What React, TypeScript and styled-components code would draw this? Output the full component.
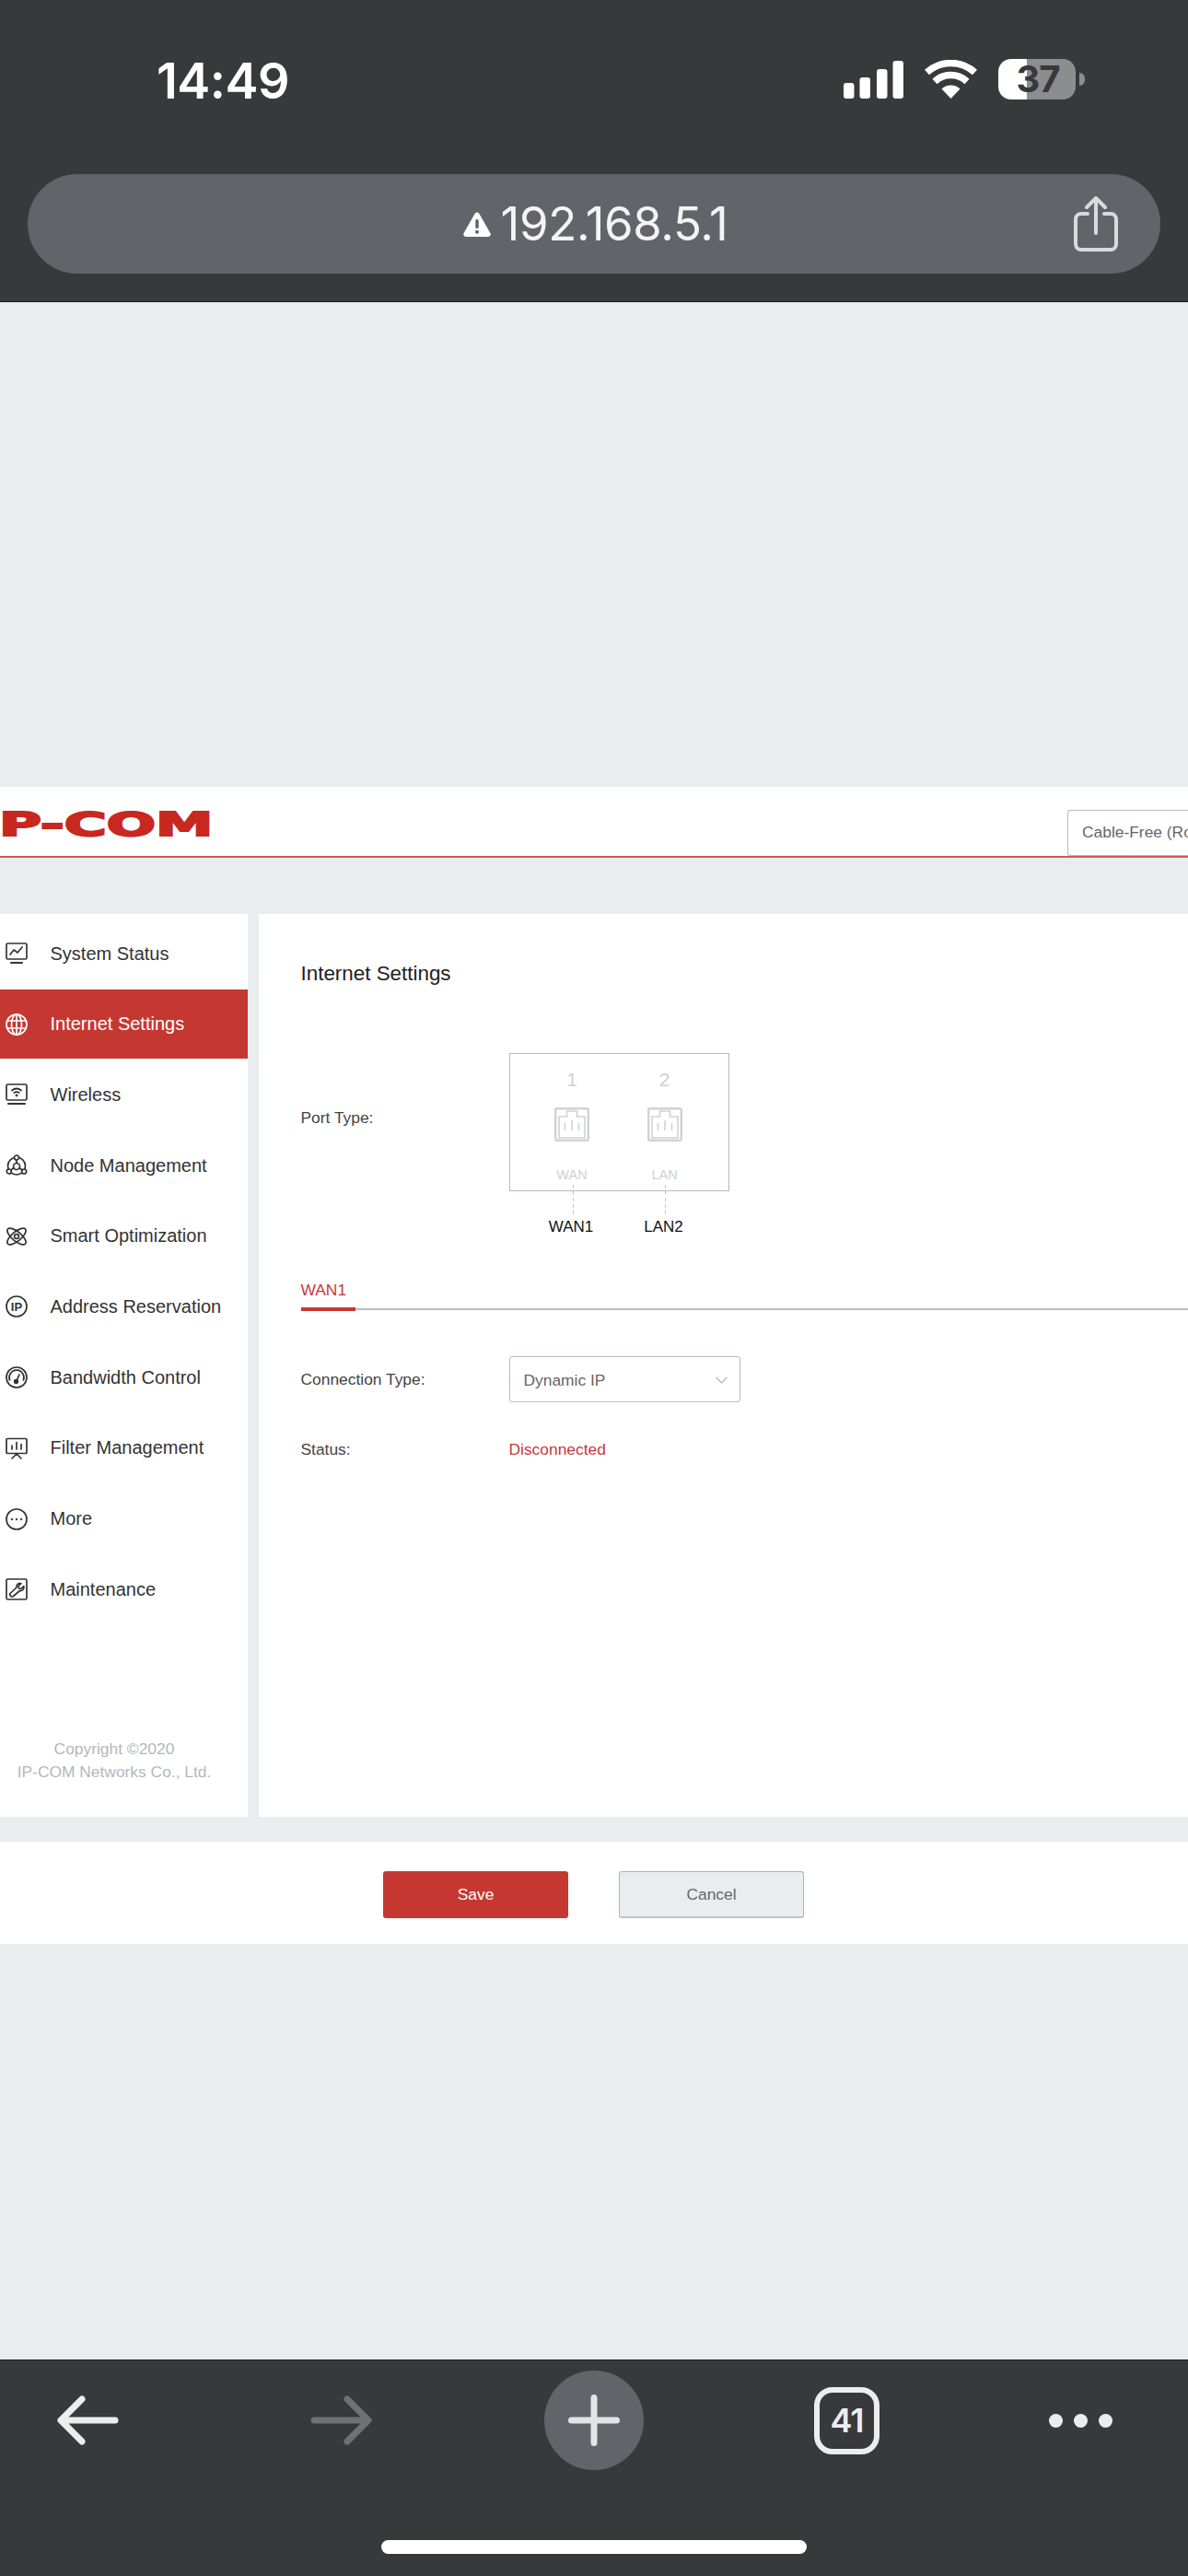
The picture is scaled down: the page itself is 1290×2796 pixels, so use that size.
import styled, { createGlobalStyle } from "styled-components";

const GlobalStyle = createGlobalStyle`
	* { box-sizing: border-box; }
	html, body { margin: 0; padding: 0; background: #e9edf0; }
	body { font-family: "Liberation Sans", Arial, sans-serif; }
`;

const Phone = styled.div`
	width: 1290px;
	height: 2796px;
	display: flex;
	flex-direction: column;
	overflow: hidden;
	background: #e9edf0;
`;

/* browser chrome, top */
const TopBar = styled.div`
	height: 328px;
	padding-top: 64px;
	background: #38393b;
	border-bottom: 1px solid #1c1c1e;
	font-family: Inter, sans-serif;
`;
const StatusRow = styled.div`
	height: 44px;
	padding: 0 112px 0 170px;
	display: flex;
	align-items: center;
	justify-content: space-between;
`;
const Time = styled.div`
	font-size: 54px;
	font-weight: 600;
	line-height: 44px;
	letter-spacing: -0.5px;
	color: #fff;
	position: relative;
	top: 2px;
`;
const StatusIcons = styled.div`
	display: flex;
	align-items: center;
	gap: 23px;
`;
const BatteryWrap = styled.div`
	display: flex;
	align-items: center;
	gap: 4px;
`;
const Battery = styled.div`
	width: 84px;
	height: 44px;
	border-radius: 14px;
	background: linear-gradient(90deg, #fff 37%, #8c8d8f 37%);
	color: #38393b;
	font-size: 40px;
	font-weight: 700;
	letter-spacing: -1px;
	line-height: 44px;
	text-align: center;
	padding-left: 2px;
`;
const BatteryNub = styled.div`
	width: 6px;
	height: 14px;
	border-radius: 0 8px 8px 0;
	background: #8c8d8f;
`;
const UrlPill = styled.div`
	height: 108px;
	margin: 81px 30px 0;
	padding: 0 46px;
	border-radius: 54px;
	background: #616469;
	display: grid;
	grid-template-columns: 1fr auto 1fr;
	align-items: center;
`;
const Url = styled.div`
	grid-column: 2;
	display: flex;
	align-items: center;
	gap: 10px;
	font-size: 51px;
	line-height: 60px;
	letter-spacing: -0.4px;
	color: #f4f4f5;
	position: relative;
	left: 1px;
`;
const ShareSlot = styled.div`
	grid-column: 3;
	display: flex;
	justify-content: flex-end;
`;

/* router admin page */
const Page = styled.div`
	flex: 1;
	padding-top: 526px;
	color: #333;
`;
const Header = styled.div`
	height: 77px;
	background: #fff;
	border-bottom: 2.5px solid #d3585a;
	display: flex;
	align-items: flex-start;
	justify-content: space-between;
	overflow: hidden;
`;
const Logo = styled.div`
	margin: 16px 0 0 -1px;
	font-family: "DejaVu Sans", sans-serif;
	font-size: 36px;
	line-height: 50px;
	font-weight: 700;
	color: #c8281f;
	-webkit-text-stroke: 2px #c8281f;
	transform: scaleX(1.74);
	transform-origin: left center;
`;
const ModeSelect = styled.div`
	width: 131px;
	height: 50px;
	margin-top: 25px;
	padding-left: 15px;
	border: 1.5px solid #b5bac3;
	border-right: 0;
	border-radius: 3px 0 0 3px;
	font-size: 17.4px;
	line-height: 47px;
	color: #666;
	white-space: nowrap;
`;
const Body = styled.div`
	margin-top: 61px;
	height: 980px;
	display: flex;
	gap: 12px;
`;
const Sidebar = styled.div`
	width: 269px;
	padding-top: 5.5px;
	background: #fff;
	display: flex;
	flex-direction: column;
	gap: 1.7px;
`;
const NavItem = styled.div<{ $active?: boolean }>`
	height: 75px;
	padding-left: 6px;
	display: flex;
	align-items: center;
	gap: 24.5px;
	font-size: 20px;
	color: ${(props) => (props.$active ? "#fff" : "#333")};
	background: ${(props) => (props.$active ? "#c53832" : "transparent")};
`;
const NavIcon = styled.svg`
	width: 24px;
	height: 24px;
	flex: none;
	fill: none;
	stroke: currentColor;
	stroke-width: 1.7;
	stroke-linecap: round;
	stroke-linejoin: round;
`;
const Copyright = styled.div`
	margin-top: auto;
	width: 248px;
	padding-bottom: 36px;
	font-size: 17.4px;
	line-height: 25px;
	text-align: center;
	color: #b4b7bb;
`;
const Main = styled.div`
	flex: 1;
	padding: 49px 0 0 45.5px;
	background: #fff;
`;
const Title = styled.div`
	font-size: 22.4px;
	line-height: 32px;
	color: #222;
`;
const PortRow = styled.div`
	margin-top: 70px;
	display: flex;
	font-size: 17.4px;
`;
const Label = styled.div`
	width: 226px;
	flex: none;
	line-height: 24px;
	font-size: 17.4px;
	color: #444;
`;
const PortLabel = styled(Label)`
	padding-top: 58px;
`;
const PortBox = styled.div`
	width: 239px;
	height: 150px;
	padding: 16px 0 0 27.5px;
	border: 1.5px solid #b4bac4;
	display: flex;
	gap: 20.5px;
`;
const PortCol = styled.div`
	position: relative;
	width: 80px;
	display: flex;
	flex-direction: column;
	align-items: center;
`;
const PortNumber = styled.div`
	font-size: 21px;
	line-height: 24px;
	color: #cfd1d4;
`;
const PortIcon = styled.svg`
	width: 38px;
	height: 37px;
	margin-top: 18px;
	fill: none;
	stroke: #d0d2d5;
	stroke-width: 1.6;
`;
const PortKind = styled.div`
	margin-top: 26px;
	font-size: 14.5px;
	line-height: 20px;
	color: #cfd1d4;
`;
const Dash = styled.div`
	position: absolute;
	left: 40.5px;
	top: 126px;
	width: 1.2px;
	height: 33px;
	background: repeating-linear-gradient(180deg, #c2c5c9 0 4px, transparent 4px 7px);
`;
const PortNames = styled.div`
	margin-top: 28px;
	padding-left: 27.5px;
	display: flex;
	gap: 20.5px;
`;
const PortName = styled.div`
	width: 80px;
	text-align: center;
	font-size: 17px;
	line-height: 22px;
	color: #111;
`;
const TabBar = styled.div`
	margin-top: 45px;
	display: flex;
	border-bottom: 2px solid #b8bcc4;
`;
const Tab = styled.div`
	width: 59px;
	margin-bottom: -3px;
	padding: 0 0 7px 0;
	border-bottom: 4px solid #c53832;
	font-size: 17.4px;
	line-height: 24px;
	color: #c8383a;
`;
const FormRow = styled.div<{ $top: number }>`
	margin-top: ${(props) => props.$top}px;
	display: flex;
	align-items: center;
`;
const Select = styled.div`
	width: 251px;
	height: 50px;
	padding: 2px 13px 0 15px;
	border: 1.5px solid #b5bac3;
	border-radius: 3px;
	display: flex;
	align-items: center;
	justify-content: space-between;
	font-size: 17.4px;
	color: #666;
`;
const Status = styled.div`
	font-size: 17.4px;
	line-height: 24px;
	color: #c9383c;
`;
const Footer = styled.div`
	margin-top: 27px;
	height: 111px;
	padding: 4px 1px 0 0;
	background: #fff;
	display: flex;
	align-items: center;
	justify-content: center;
	gap: 55px;
`;
const Button = styled.div<{ $primary?: boolean }>`
	width: 201px;
	height: 51px;
	border-radius: 3px;
	display: flex;
	align-items: center;
	justify-content: center;
	font-size: 17.4px;
	color: ${(props) => (props.$primary ? "#fff" : "#666")};
	background: ${(props) => (props.$primary ? "#c53832" : "#e9edf0")};
	border: ${(props) => (props.$primary ? "0" : "1.5px solid #aeb2ba")};
	border-bottom: ${(props) => (props.$primary ? "0" : "2px solid #c0c2c6")};
`;

/* browser chrome, bottom */
const BottomBar = styled.div`
	height: 235px;
	padding-top: 11px;
	background: #38393b;
	border-top: 1px solid #1c1c1e;
	font-family: Inter, sans-serif;
`;
const ToolRow = styled.div`
	display: grid;
	grid-template-columns: 191px 358px 192px 357px 150px;
	align-items: center;
	justify-items: center;
`;
const NewTab = styled.div`
	width: 108px;
	height: 108px;
	border-radius: 50%;
	background: #616469;
	display: flex;
	align-items: center;
	justify-content: center;
`;
const TabCount = styled.div`
	width: 71px;
	height: 73px;
	border: 6.5px solid #ecedee;
	border-radius: 20px;
	display: flex;
	align-items: center;
	justify-content: center;
	font-size: 36px;
	font-weight: 600;
	letter-spacing: -1px;
	color: #ecedee;
`;
const Dots = styled.div`
	display: flex;
	gap: 12px;
`;
const Dot = styled.div`
	width: 15px;
	height: 15px;
	border-radius: 50%;
	background: #ecedee;
`;
const HomeIndicator = styled.div`
	width: 462px;
	height: 15px;
	margin: 76px auto 0;
	border-radius: 8px;
	background: #fff;
`;

const navItems = [
	{
		label: "System Status",
		icon: (
			<>
				<rect x="1" y="1" width="22" height="17" rx="1.5" />
				<path d="M5 13l4-5 4 3 5-6" />
				<path d="M6 22h12" strokeWidth="2" />
			</>
		),
	},
	{
		label: "Internet Settings",
		active: true,
		icon: (
			<>
				<circle cx="12" cy="12" r="11" />
				<ellipse cx="12" cy="12" rx="5.5" ry="11" />
				<path d="M12 1v22M2 8h20M2 16h20" />
			</>
		),
	},
	{
		label: "Wireless",
		icon: (
			<>
				<rect x="1" y="1" width="22" height="17" rx="1.5" />
				<path d="M7 7.5c3-2.4 7-2.4 10 0M9.3 10c1.7-1.2 3.7-1.2 5.4 0" />
				<circle cx="12" cy="13" r="0.6" />
				<path d="M3 22h18" strokeWidth="2" />
			</>
		),
	},
	{
		label: "Node Management",
		icon: (
			<>
				<circle cx="12" cy="12.5" r="9.5" />
				<circle cx="12" cy="3.5" r="2.5" fill="#fff" />
				<circle cx="3.8" cy="18.5" r="2.5" fill="#fff" />
				<circle cx="20.2" cy="18.5" r="2.5" fill="#fff" />
				<circle cx="12" cy="13" r="3.5" />
				<path d="M12 6v3.5M5.8 17l3.2-2.3M18.2 17L15 14.7" />
			</>
		),
	},
	{
		label: "Smart Optimization",
		icon: (
			<>
				<ellipse cx="12" cy="12" rx="12.5" ry="5" transform="rotate(40 12 12)" />
				<ellipse cx="12" cy="12" rx="12.5" ry="5" transform="rotate(-40 12 12)" />
				<circle cx="12" cy="12" r="2.4" />
			</>
		),
	},
	{
		label: "Address Reservation",
		icon: (
			<>
				<circle cx="12" cy="12" r="11" />
				<text
					x="12"
					y="16.7"
					textAnchor="middle"
					fontSize="13"
					fontWeight="700"
					fontFamily="Liberation Sans, sans-serif"
					fill="currentColor"
					stroke="none"
				>
					IP
				</text>
			</>
		),
	},
	{
		label: "Bandwidth Control",
		icon: (
			<>
				<circle cx="12" cy="12" r="11" />
				<path d="M4.5 15a8 8 0 1 1 15 0" />
				<path d="M15 9l-2.6 6" />
				<circle cx="11.5" cy="16.5" r="1.8" fill="currentColor" />
			</>
		),
	},
	{
		label: "Filter Management",
		icon: (
			<>
				<rect x="1" y="1.5" width="22" height="16" rx="1" />
				<path d="M7 13V9M12 13V5.5M17 13V7.5M12 18l-5 5M12 18l5 5" />
			</>
		),
	},
	{
		label: "More",
		icon: (
			<>
				<circle cx="12" cy="12" r="11" />
				<circle cx="7" cy="12" r="0.4" />
				<circle cx="12" cy="12" r="0.4" />
				<circle cx="17" cy="12" r="0.4" />
			</>
		),
	},
	{
		label: "Maintenance",
		icon: (
			<>
				<rect x="1" y="1" width="22" height="22" rx="1.5" />
				<path d="M4.5 17l7.500-7c-.7-2.800 1.800-5 4.800-4.300l-2.800 2.800.5 2.500 2.500.5 2.800-2.800c.7 3-1.500 5.500-4.300 4.800l-7 6c-.8.8-2 .8-2.800 0s-1.500-2-.7-2.500z" />
			</>
		),
	},
];

function JackIcon() {
	return (
		<PortIcon viewBox="0 0 38 37">
			<rect x="1.2" y="1.2" width="35.6" height="34.6" rx="1.5" strokeWidth="2.4" />
			<path d="M5 33V10h8.5V4h11v6H33v23z" />
			<path d="M11.5 25v-8M19 25V14M26.5 25v-8" />
		</PortIcon>
	);
}

function ChevronDown() {
	return (
		<svg width="13" height="8" viewBox="0 0 13 8" fill="none" stroke="#a9adb3" strokeWidth="1.2">
			<path d="M0.5 0.8L6.5 7l6-6.2" />
		</svg>
	);
}

export default function App() {
	return (
		<Phone>
			<GlobalStyle />
			<TopBar>
				<StatusRow>
					<Time>14:49</Time>
					<StatusIcons>
						<svg width="65" height="41" viewBox="0 0 65 41" fill="#fff">
							<rect x="0" y="24" width="11.5" height="17" rx="3" />
							<rect x="17.5" y="18" width="11.5" height="23" rx="3" />
							<rect x="36" y="9" width="11.5" height="32" rx="3" />
							<rect x="53.5" y="0" width="11.5" height="41" rx="3" />
						</svg>
						<svg width="57" height="42" viewBox="0 0 57 42" fill="none" stroke="#fff" strokeWidth="7.5">
							<path d="M2.5 13.6A38.500 38.500 0 0 1 54.5 13.6" />
							<path d="M11 23.4A25.500 25.500 0 0 1 46 23.4" />
							<path d="M28.5 42L18.5 31.5A14.500 14.500 0 0 1 38.5 31.5z" fill="#fff" stroke="none" />
						</svg>
						<BatteryWrap>
							<Battery>37</Battery>
							<BatteryNub />
						</BatteryWrap>
					</StatusIcons>
				</StatusRow>
				<UrlPill>
					<Url>
						<svg width="32" height="28" viewBox="0 0 32 28">
							<path d="M16 1.5c1 0 1.800.5 2.400 1.500l12 21c1 1.800-.2 4-2.400 4H4c-2.200 0-3.400-2.200-2.400-4l12-21c.6-1 1.400-1.500 2.400-1.500z" fill="#fff" />
							<rect x="14.3" y="9" width="3.4" height="10" rx="1.5" fill="#616469" />
							<circle cx="16" cy="22.8" r="2" fill="#616469" />
						</svg>
						192.168.5.1
					</Url>
					<ShareSlot>
						<svg width="48" height="60" viewBox="0 0 48 60" fill="none" stroke="#d9dadb" strokeWidth="4" strokeLinecap="round" strokeLinejoin="round">
							<path d="M15 19H8a6 6 0 0 0-6 6v27a6 6 0 0 0 6 6h32a6 6 0 0 0 6-6V25a6 6 0 0 0-6-6h-7" />
							<path d="M24 40V3M14 12l10-10 10 10" />
						</svg>
					</ShareSlot>
				</UrlPill>
			</TopBar>

			<Page>
				<Header>
					<Logo>P-COM</Logo>
					<ModeSelect>Cable-Free (Ro</ModeSelect>
				</Header>
				<Body>
					<Sidebar>
						{navItems.map((item) => (
							<NavItem key={item.label} $active={item.active}>
								<NavIcon viewBox="0 0 24 24">{item.icon}</NavIcon>
								{item.label}
							</NavItem>
						))}
						<Copyright>
							Copyright ©2020
							<br />
							IP-COM Networks Co., Ltd.
						</Copyright>
					</Sidebar>
					<Main>
						<Title>Internet Settings</Title>
						<PortRow>
							<PortLabel>Port Type:</PortLabel>
							<div>
								<PortBox>
									<PortCol>
										<PortNumber>1</PortNumber>
										<JackIcon />
										<PortKind>WAN</PortKind>
										<Dash />
									</PortCol>
									<PortCol>
										<PortNumber>2</PortNumber>
										<JackIcon />
										<PortKind>LAN</PortKind>
										<Dash />
									</PortCol>
								</PortBox>
								<PortNames>
									<PortName>WAN1</PortName>
									<PortName>LAN2</PortName>
								</PortNames>
							</div>
						</PortRow>
						<TabBar>
							<Tab>WAN1</Tab>
						</TabBar>
						<FormRow $top={50}>
							<Label>Connection Type:</Label>
							<Select>
								Dynamic IP
								<ChevronDown />
							</Select>
						</FormRow>
						<FormRow $top={39}>
							<Label>Status:</Label>
							<Status>Disconnected</Status>
						</FormRow>
					</Main>
				</Body>
				<Footer>
					<Button $primary>Save</Button>
					<Button>Cancel</Button>
				</Footer>
			</Page>

			<BottomBar>
				<ToolRow>
					<svg width="67" height="54" viewBox="0 0 67 54" fill="none" stroke="#eceded" strokeWidth="7" strokeLinecap="round" strokeLinejoin="round">
						<path d="M63 27H5M27 4L4 27l23 23" />
					</svg>
					<svg width="67" height="54" viewBox="0 0 67 54" fill="none" stroke="#6f7174" strokeWidth="7" strokeLinecap="round" strokeLinejoin="round">
						<path d="M4 27h58M40 4l23 23-23 23" />
					</svg>
					<NewTab>
						<svg width="56" height="56" viewBox="0 0 56 56" fill="none" stroke="#e3e4e5" strokeWidth="7" strokeLinecap="round">
							<path d="M28 3.5v49M3.5 28h49" />
						</svg>
					</NewTab>
					<TabCount>41</TabCount>
					<Dots>
						<Dot />
						<Dot />
						<Dot />
					</Dots>
				</ToolRow>
				<HomeIndicator />
			</BottomBar>
		</Phone>
	);
}
